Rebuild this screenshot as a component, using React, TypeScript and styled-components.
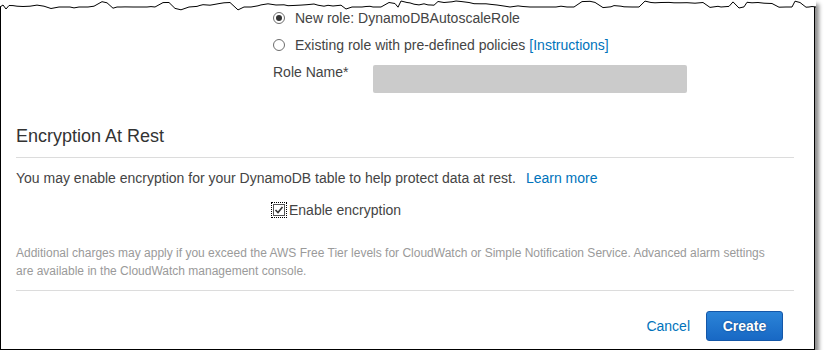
import styled, { createGlobalStyle } from 'styled-components';

const GlobalStyle = createGlobalStyle`
  body {
    margin: 0;
    background: #fff;
    font-family: "Liberation Sans", Arial, sans-serif;
  }
`;

const Frame = styled.div`
  position: relative;
  box-sizing: border-box;
  width: 815px;
  height: 350px;
  background: #fff;
  border: 1px solid #000;
  border-top: none;
  box-shadow: 4px 4px 4px rgba(0, 0, 0, 0.45);
  padding: 0 20px 0 15px;
  color: #444;
  font-size: 14px;
`;

const TornSvg = styled.svg`
  position: absolute;
  top: 0;
  left: -1px;
`;

const RoleBlock = styled.div`
  padding: 4px 0 0 257px;
`;

const RadioRow = styled.label`
  display: flex;
  align-items: center;
  gap: 10px;
  height: 27px;
  line-height: 16px;
`;

const Radio = styled.span<{ $checked?: boolean }>`
  box-sizing: border-box;
  width: 12px;
  height: 12px;
  border-radius: 50%;
  border: 1px solid #6d6d6d;
  display: flex;
  align-items: center;
  justify-content: center;
  &::after {
    content: '';
    width: 6px;
    height: 6px;
    border-radius: 50%;
    background: ${({ $checked }) => ($checked ? '#333' : 'transparent')};
  }
`;

const Link = styled.a<{ $gap?: number }>`
  color: #0073bb;
  text-decoration: none;
  margin-left: ${({ $gap }) => $gap ?? 4}px;
`;

const FieldRow = styled.div`
  display: flex;
  align-items: flex-start;
  margin-top: 6px;
`;

const FieldLabel = styled.span`
  width: 100px;
  line-height: 16px;
`;

const GrayInput = styled.div`
  margin-top: 1px;
  width: 314px;
  height: 28px;
  background: #cbcbcb;
  border-radius: 2px;
`;

const SectionTitle = styled.h2`
  margin: 32px 0 0;
  padding-bottom: 10px;
  border-bottom: 1px solid #dcdcdc;
  font-size: 18px;
  font-weight: normal;
  line-height: 22px;
  color: #333;
`;

const Para = styled.p`
  margin: 10px 0 0;
  line-height: 20px;
`;

const CheckRow = styled.label`
  display: flex;
  align-items: center;
  gap: 3px;
  margin-top: 13px;
  padding-left: 256px;
  height: 18px;
`;

const CheckBox = styled.span`
  box-sizing: border-box;
  width: 14px;
  height: 14px;
  outline: 1px dotted #000;
  display: flex;
  align-items: center;
  justify-content: center;
`;

const CheckInner = styled.span`
  box-sizing: border-box;
  width: 12px;
  height: 12px;
  border: 1px solid #555;
  display: flex;
  align-items: center;
  justify-content: center;
`;

const Note = styled.p`
  margin: 25px 0 0;
  padding-bottom: 10px;
  border-bottom: 1px solid #dcdcdc;
  font-size: 12px;
  line-height: 18px;
  color: #9a9a9a;
`;

const Footer = styled.div`
  display: flex;
  justify-content: flex-end;
  align-items: center;
  gap: 16px;
  margin: 20px 11px 0 0;
`;

const CancelLink = styled.a`
  color: #0073bb;
  font-size: 14px;
`;

const CreateButton = styled.button`
  width: 77px;
  height: 30px;
  border: 1px solid #1457a8;
  border-radius: 3px;
  background: linear-gradient(#2b84d8, #1868c4);
  color: #fff;
  font-family: "Liberation Sans", Arial, sans-serif;
  font-size: 14px;
  font-weight: bold;
  text-shadow: 0 0 2px #0b3d7a;
`;

// jagged top edge of the cut-out screenshot
const tornPoints = () => {
  let seed = 7;
  const rnd = () => {
    seed = (seed * 16807) % 2147483647;
    return seed / 2147483647;
  };
  const pts: string[] = ['0,16', '0,7', '3,5', '6,9'];
  let x = 6;
  let y = 6;
  while (x < 816) {
    x += 3 + Math.floor(rnd() * 6);
    const r = rnd();
    if (r < 0.12) y = 1 + rnd() * 2;
    else if (r < 0.2) y = 7 + rnd() * 3;
    else y = Math.max(2.5, Math.min(7, y + (rnd() - 0.5) * 2.5));
    pts.push(`${Math.min(x, 816)},${y.toFixed(1)}`);
  }
  pts.push('816,16');
  return pts;
};

const TornEdge = () => {
  const pts = tornPoints();
  const line = pts.slice(1, -1).join(' ');
  const fill = ['0,0', ...pts.slice(1, -1), '816,0'].join(' ');
  return (
    <TornSvg width="817" height="16" viewBox="0 0 817 16">
      <polygon points={fill} fill="#fff" />
      <polyline points={line} fill="none" stroke="#000" strokeWidth="1" />
    </TornSvg>
  );
};

export default function App() {
  return (
    <>
      <GlobalStyle />
      <Frame>
        <RoleBlock>
          <RadioRow>
            <Radio $checked />
            New role: DynamoDBAutoscaleRole
          </RadioRow>
          <RadioRow>
            <Radio />
            <span>
              Existing role with pre-defined policies
              <Link href="#">[Instructions]</Link>
            </span>
          </RadioRow>
          <FieldRow>
            <FieldLabel>Role Name*</FieldLabel>
            <GrayInput />
          </FieldRow>
        </RoleBlock>

        <SectionTitle>Encryption At Rest</SectionTitle>
        <Para>
          You may enable encryption for your DynamoDB table to help protect data at rest.
          <Link href="#" $gap={10}>Learn more</Link>
        </Para>
        <CheckRow>
          <CheckBox>
            <CheckInner>
              <svg width="10" height="10" viewBox="0 0 10 10">
                <path d="M1.5 5 L4 7.5 L8.5 2" fill="none" stroke="#333" strokeWidth="1.6" />
              </svg>
            </CheckInner>
          </CheckBox>
          Enable encryption
        </CheckRow>

        <Note>
          Additional charges may apply if you exceed the AWS Free Tier levels for CloudWatch or Simple
          Notification Service. Advanced alarm settings
          <br />
          are available in the CloudWatch management console.
        </Note>

        <Footer>
          <CancelLink>Cancel</CancelLink>
          <CreateButton>Create</CreateButton>
        </Footer>
        <TornEdge />
      </Frame>
    </>
  );
}
